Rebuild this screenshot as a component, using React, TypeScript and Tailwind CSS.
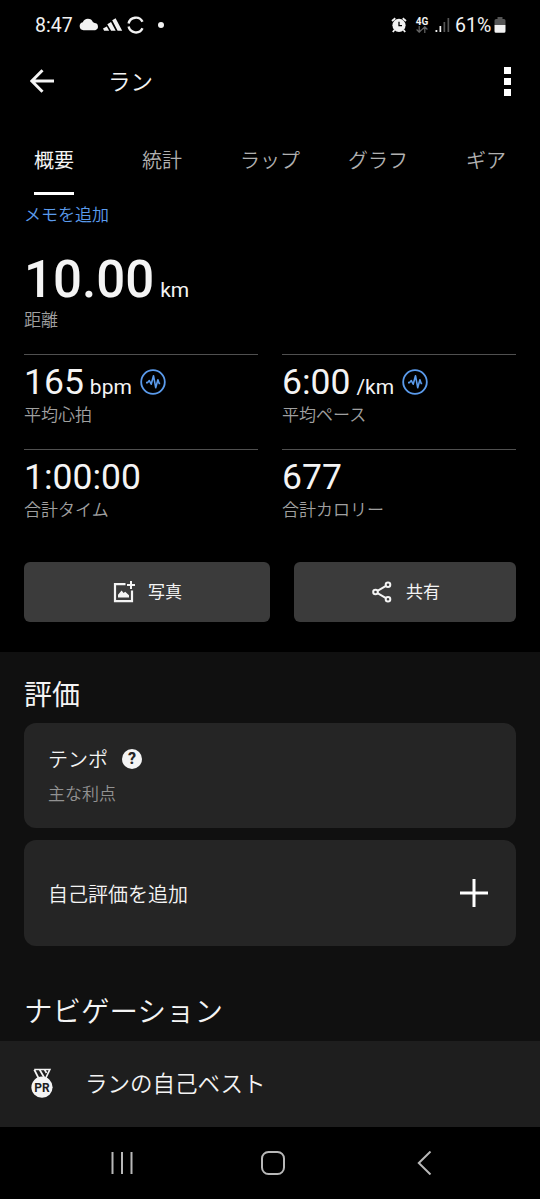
import type { ReactNode } from 'react';

const tabs = ['概要', '統計', 'ラップ', 'グラフ', 'ギア'];

function StatusBar() {
  return (
    <div className="flex h-12 items-center justify-between pt-0.5 pr-[34px] pl-[35px] text-[#f2f2f2]">
      <div className="flex items-center">
        <span className="w-[44px] pt-px text-[19.5px] leading-6">8:47</span>
        <svg className="h-4 w-[20px]" viewBox="0 0 20 16" fill="currentColor">
          <path d="M4.500 13.200a4 4 0 0 1-.7-7.900A5.500 5.500 0 0 1 14 5.200a3.500 3.500 0 0 1 1.500.9 3.600 3.600 0 0 1 .7 7.100Z" />
        </svg>
        <svg className="ml-1 h-4 w-[20px]" viewBox="0 0 20 16" fill="currentColor">
          <path d="M9.200 3.200 12.600 1.200 19.200 13.700h-4.600ZM4.300 7.200 8 5.100l4.700 8.600H8.100ZM0 11.600l3.800-2.100 2.400 4.200H1.100Z" />
        </svg>
        <svg className="ml-1 h-[18px] w-[18px]" viewBox="0 0 18 18" fill="none" stroke="currentColor" strokeWidth="2.400">
          <path d="M1.600 7.600A7.400 7.400 0 0 1 15.500 5.800M1.600 10.600A7.400 7.400 0 0 0 15.500 12.200" />
        </svg>
        <span className="ml-[13px] h-1.5 w-1.5 rounded-full bg-current" />
      </div>
      <div className="flex items-center">
        <svg className="h-4 w-4" viewBox="0 0 16 16">
          <g fill="none" stroke="currentColor" strokeWidth="1.800">
            <path d="M1 4 4.300 1.200M15 4 11.700 1.200M3.500 13 1.800 15M12.500 13l1.700 2" />
          </g>
          <circle cx="8" cy="8.300" r="6.600" fill="currentColor" />
          <path d="M8 4.700v4h3" fill="none" stroke="#000" strokeWidth="1.300" />
        </svg>
        <div className="ml-[7px] flex w-4 flex-col items-center">
          <span className="text-[10px] leading-[9px] font-bold">4G</span>
          <svg className="h-[7px] w-3 text-[#666]" viewBox="0 0 12 7" fill="none" stroke="currentColor" strokeWidth="1.200">
            <path d="M3.200 0v6M.6 3.500l2.600 2.700 2.600-2.700M8.800 7V1M6.200 3.500 8.800.8l2.600 2.700" />
          </svg>
        </div>
        <svg className="ml-[5px] h-[15px] w-[15px]" viewBox="0 0 15 15" fill="currentColor">
          <path d="M.5 12h1.800v2H.5ZM4.500 8h1.700v6H4.500Z" />
          <path d="M8.500 4h1.700v10H8.500ZM12.500 0h1.700v14h-1.700Z" fill="#555" />
        </svg>
        <span className="ml-[5px] w-[39px] pt-px text-[19.500px] leading-6 whitespace-nowrap">61%</span>
        <svg className="h-[16px] w-[12px]" viewBox="0 0 12 16">
          <path d="M3.500 0h5v2H10a1.500 1.500 0 0 1 1.500 1.500V8h-11V3.500A1.500 1.500 0 0 1 2 2h1.500Z" fill="#555" />
          <path d="M.5 8h11v6.300a1.500 1.500 0 0 1-1.500 1.500H2a1.500 1.500 0 0 1-1.500-1.500Z" fill="currentColor" />
        </svg>
      </div>
    </div>
  );
}

function PulseIcon() {
  return (
    <svg className="h-[26px] w-[26px]" viewBox="0 0 26 26" fill="none" stroke="#5b9bec">
      <circle cx="13" cy="13" r="11.800" strokeWidth="1.800" />
      <path d="M6 13.600h1.600l1.700-2 1.900 3.600 2.300-8.500 2.200 12 2.200-8 1.300 3.800h1" strokeWidth="1.600" strokeLinejoin="round" />
    </svg>
  );
}

type StatProps = {
  value: string;
  unit?: string;
  label: string;
  icon?: ReactNode;
};

function Stat({ value, unit, label, icon }: StatProps) {
  return (
    <div className="h-[95px] flex-1 border-t border-[#505050] pt-[7px]">
      <div className="flex h-10 items-center">
        <div className="flex items-baseline gap-[6px]">
          <span className="text-[35.5px] leading-10">{value}</span>
          {unit && <span className="text-[21px] leading-6">{unit}</span>}
        </div>
        {icon && <div className="ml-2">{icon}</div>}
      </div>
      <div className="pt-px text-[17px] leading-6 font-[350] text-[#a0a0a0]">{label}</div>
    </div>
  );
}

export default function App() {
  return (
    <div className="flex h-[1199px] w-[540px] flex-col overflow-hidden bg-black font-[Roboto,'Noto_Sans_CJK_JP',sans-serif] text-[#f4f4f4]">
      <StatusBar />

      <header className="flex h-[66px] items-center pr-[29px] pl-[30px]">
        <svg className="h-6 w-6" viewBox="0 0 24 24" fill="none" stroke="currentColor" strokeWidth="3">
          <path d="M24 12H2.500M12.500 1.300 1.800 12l10.700 10.700" />
        </svg>
        <h1 className="ml-[54px] flex-1 pt-0.5 text-[22.5px] leading-8 font-[350]">ラン</h1>
        <div className="flex w-2 flex-col items-center gap-1">
          <span className="h-[7px] w-[7px] bg-white" />
          <span className="h-[7px] w-[7px] bg-white" />
          <span className="h-[7px] w-[7px] bg-white" />
        </div>
      </header>

      <nav className="flex h-[81px] pt-[31px]">
        {tabs.map((tab, i) => (
          <div key={tab} className="flex flex-1 flex-col items-center justify-between">
            <span className={i === 0 ? 'text-xl leading-8' : 'text-xl leading-8 font-[350] text-[#b0b0b0]'}>{tab}</span>
            {i === 0 && <span className="h-[3px] w-10 bg-white" />}
          </div>
        ))}
      </nav>

      <section className="h-[457px] px-6 pt-2">
        <div className="text-[17px] leading-6 font-[350] text-[#5b9bec]">メモを追加</div>
        <div className="mt-[23px] flex h-[60px] items-baseline gap-[6px]">
          <span className="text-[51px] leading-[60px] font-medium">10.00</span>
          <span className="text-[21px] leading-6">km</span>
        </div>
        <div className="-mt-0.5 text-[17px] leading-6 font-[350] text-[#a0a0a0]">距離</div>

        <div className="mt-[22px] flex gap-6">
          <Stat value="165" unit="bpm" label="平均心拍" icon={<PulseIcon />} />
          <Stat value="6:00" unit="/km" label="平均ペース" icon={<PulseIcon />} />
        </div>
        <div className="flex gap-6">
          <Stat value="1:00:00" label="合計タイム" />
          <Stat value="677" label="合計カロリー" />
        </div>

        <div className="mt-[18px] flex gap-6">
          <button className="flex h-[60px] w-[246px] items-center justify-center gap-3 rounded-md bg-[#3b3b3b] text-[17px]">
            <svg className="h-6 w-6" viewBox="0 0 24 24">
              <path d="M13.500 4.200H3v17h17V10.500" fill="none" stroke="currentColor" strokeWidth="2.200" />
              <path d="M19 1v8M15 5h8" fill="none" stroke="currentColor" strokeWidth="2" />
              <path d="M6 17.500v-2.700l3.600-4.200 2 2.400 1.600-1.200 3.800 3.400v2.300Z" fill="currentColor" />
            </svg>
            <span className="pt-0.5">写真</span>
          </button>
          <button className="flex h-[60px] flex-1 items-center justify-center gap-3 rounded-md bg-[#3b3b3b] text-[17px]">
            <svg className="h-6 w-6" viewBox="0 0 24 24" fill="none" stroke="currentColor" strokeWidth="2">
              <circle cx="5.500" cy="12" r="2.300" />
              <circle cx="18" cy="4.800" r="2.300" />
              <circle cx="18" cy="19.200" r="2.300" />
              <path d="m7.500 10.800 8.500-4.900M7.500 13.200l8.500 4.900" />
            </svg>
            <span className="pt-0.5">共有</span>
          </button>
        </div>
      </section>

      <section className="h-[389px] bg-[#101010] px-6 pt-6">
        <h2 className="h-[47px] text-[28px] leading-10">評価</h2>
        <div className="h-[105px] rounded-xl bg-[#252525] px-6 pt-[19px]">
          <div className="flex items-center">
            <span className="pt-0.5 text-xl leading-8 font-[350]">テンポ</span>
            <span className="ml-[14px] flex h-5 w-5 items-center justify-center rounded-full bg-[#f4f4f4] text-base leading-5 font-extrabold text-[#252525]">?</span>
          </div>
          <div className="mt-1.5 text-[17px] leading-6 font-[350] text-[#929292]">主な利点</div>
        </div>
        <div className="mt-3 flex h-[106px] items-center justify-between rounded-xl bg-[#252525] px-6">
          <span className="pt-[3px] text-xl leading-8 font-[350]">自己評価を追加</span>
          <svg className="mr-1 h-7 w-7" viewBox="0 0 28 28" fill="none" stroke="#fff" strokeWidth="3">
            <path d="M14 0v28M0 14h28" />
          </svg>
        </div>
        <h2 className="mt-[47px] text-[28.5px] leading-10 font-[350]">ナビゲーション</h2>
      </section>

      <div className="flex h-[86px] items-center bg-[#1e1e1e] pl-[31px]">
        <svg className="-mt-0.5 h-[30px] w-[22px]" viewBox="0 0 22 30">
          <path d="M3.200 1.500h15.600l-4 8.500M3.200 1.500l4.300 8.500M8.500 1.500l5 8.500M13.500 1.500l2 3.500" fill="none" stroke="currentColor" strokeWidth="1.700" />
          <circle cx="11" cy="19.200" r="10.600" fill="currentColor" />
          <text x="11" y="23.500" textAnchor="middle" fontSize="12" fontWeight="700" fill="#1e1e1e">PR</text>
        </svg>
        <span className="ml-8 text-[22.5px] leading-8 font-[350]">ランの自己ベスト</span>
      </div>

      <div className="flex h-[72px] items-center text-[#b8b8b8]">
        <svg className="ml-[110px] h-6 w-6" viewBox="0 0 24 24" fill="none" stroke="currentColor" strokeWidth="2">
          <path d="M2.500 1v22M12 1v22M21.500 1v22" />
        </svg>
        <svg className="ml-[127px] h-6 w-6" viewBox="0 0 24 24" fill="none" stroke="currentColor" strokeWidth="2">
          <rect x="1" y="1" width="22" height="22" rx="6.500" />
        </svg>
        <svg className="ml-[127px] h-6 w-6" viewBox="0 0 24 24" fill="none" stroke="currentColor" strokeWidth="2">
          <path d="M18.500.5 6.800 12l11.700 11.500" />
        </svg>
      </div>
    </div>
  );
}
